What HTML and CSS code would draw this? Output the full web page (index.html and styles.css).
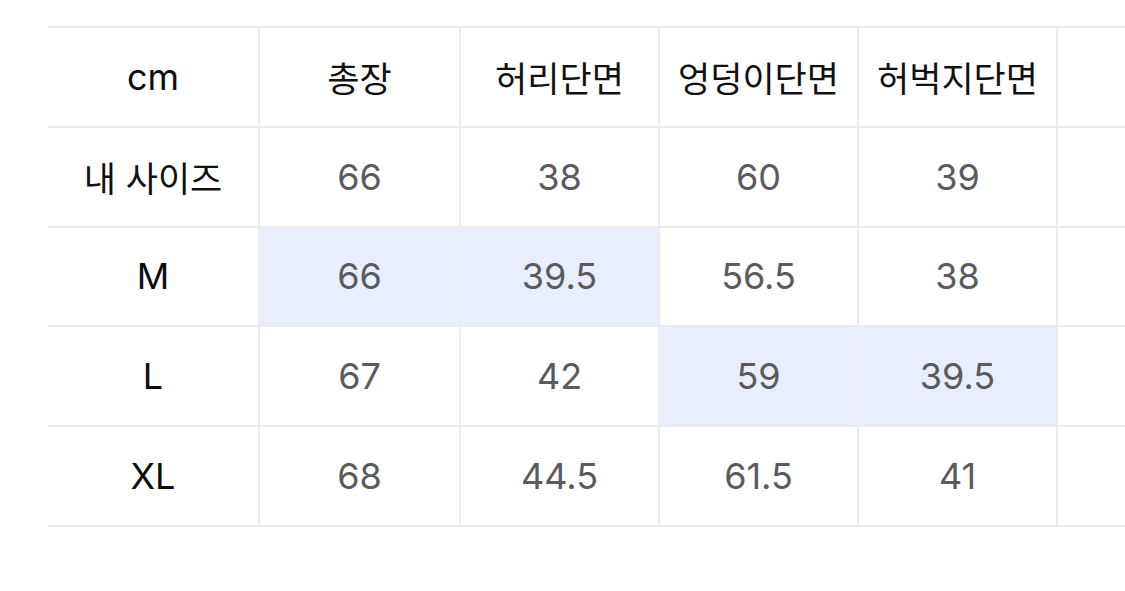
FILE: index.html
```html
<!DOCTYPE html>
<html lang="ko">
<head>
<meta charset="utf-8">
<link rel="stylesheet" href="styles.css">
</head>
<body>
<div class="table">
  <div class="cell head">cm</div>
  <div class="cell head ko">총장</div>
  <div class="cell head ko">허리단면</div>
  <div class="cell head ko">엉덩이단면</div>
  <div class="cell head ko">허벅지단면</div>
  <div class="cell last"></div>

  <div class="cell head ko">내 사이즈</div>
  <div class="cell val">66</div>
  <div class="cell val">38</div>
  <div class="cell val">60</div>
  <div class="cell val">39</div>
  <div class="cell last"></div>

  <div class="cell head">M</div>
  <div class="cell val hl">66</div>
  <div class="cell val hl">39.5</div>
  <div class="cell val">56.5</div>
  <div class="cell val">38</div>
  <div class="cell last"></div>

  <div class="cell head">L</div>
  <div class="cell val">67</div>
  <div class="cell val">42</div>
  <div class="cell val hl">59</div>
  <div class="cell val hl">39.5</div>
  <div class="cell last"></div>

  <div class="cell head">XL</div>
  <div class="cell val">68</div>
  <div class="cell val">44.5</div>
  <div class="cell val">61.5</div>
  <div class="cell val">41</div>
  <div class="cell last"></div>
</div>
</body>
</html>
```
FILE: styles.css
```css
html, body {
  margin: 0;
  padding: 0;
  background: #ffffff;
}
body {
  font-family: Inter, "Noto Sans CJK KR", sans-serif;
  padding: 26px 0 0 48px;
}
.table {
  display: grid;
  grid-template-columns: 212px 201px 199px 199px 199px 1fr;
  grid-auto-rows: 99.75px;
  border-top: 2px solid #ececec;
}
.cell {
  box-sizing: border-box;
  display: flex;
  align-items: center;
  justify-content: center;
  border-right: 2px solid #ececec;
  border-bottom: 2px solid #ececec;
  font-size: 36px;
  line-height: 1;
}
.cell.last {
  border-right: none;
}
.head {
  color: #0d0d0d;
  font-weight: 400;
}
.ko {
  font-family: "Noto Sans CJK KR", sans-serif;
  font-size: 35px;
  font-weight: 400;
  color: #111111;
}
.val {
  color: #5b5b5e;
  font-weight: 400;
}
.hl {
  background: #e9eefc;
}
```
